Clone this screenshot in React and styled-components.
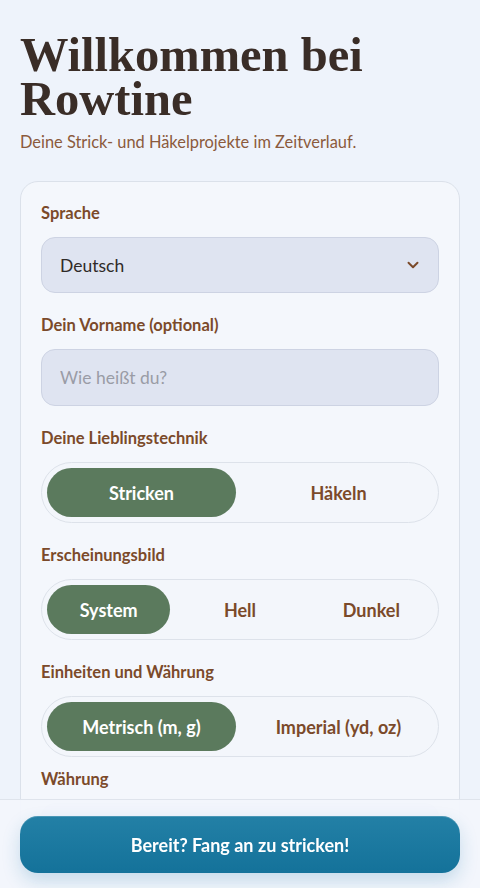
import { useState } from 'react'
import styled, { createGlobalStyle } from 'styled-components'

const GlobalStyle = createGlobalStyle`
    html, body {
        margin: 0;
        padding: 0;
        background: #eef3fb;
    }
    body {
        font-family: Lato, 'Noto Sans', sans-serif;
        color: #3a2d27;
    }
    * {
        box-sizing: border-box;
    }
`

const Page = styled.main`
    padding: 33px 20px 120px 20px;
`

const Title = styled.h1`
    font-family: 'Liberation Serif', 'DejaVu Serif', serif;
    font-weight: 700;
    font-size: 48.5px;
    line-height: 44px;
    color: #3a2d27;
    margin: 0 0 10px 0;
`

const Subtitle = styled.p`
    margin: 0 0 28px 0;
    font-size: 16.4px;
    line-height: 22px;
    color: #8b5a3c;
`

const Card = styled.section`
    background: #f4f7fc;
    border: 1px solid #dbe1ea;
    border-radius: 18px;
    padding: 21px 20px 24px 20px;
    display: flex;
    flex-direction: column;
    gap: 22px;
`

const Field = styled.div`
    display: flex;
    flex-direction: column;
    gap: 14px;
`

const Label = styled.label`
    font-size: 16.5px;
    line-height: 20px;
    font-weight: 700;
    color: #7b4a2a;
    margin-top: ${({ sub }) => (sub ? '-2px' : '0')};
`

const SelectBox = styled.div`
    display: flex;
    align-items: center;
    justify-content: space-between;
    height: 56px;
    padding: 0 16px 0 18px;
    background: #dfe4f1;
    border: 1px solid #cdd3e3;
    border-radius: 14px;
    font-size: 17.5px;
    color: #2f2a28;
`

const TextInput = styled.input`
    height: 57px;
    padding: 0 18px;
    background: #dfe4f1;
    border: 1px solid #cdd3e3;
    border-radius: 14px;
    font-family: inherit;
    font-size: 17.5px;
    color: #2f2a28;
    outline: none;

    &::placeholder {
        color: #9a9ca6;
    }
`

const Segmented = styled.div`
    display: grid;
    grid-template-columns: repeat(${({ count }) => count}, 1fr);
    gap: 8px;
    height: 61px;
    padding: 5px;
    border: 1px solid #dde2ea;
    border-radius: 999px;
    background: #f3f6fb;
`

const Option = styled.button`
    height: 49px;
    border: none;
    border-radius: 999px;
    font-family: inherit;
    font-size: 18px;
    font-weight: 700;
    cursor: pointer;
    background: ${({ active }) => (active ? '#5b7a5d' : 'transparent')};
    color: ${({ active }) => (active ? '#ffffff' : '#7b4a2a')};
`

const BottomBar = styled.footer`
    position: fixed;
    left: 0;
    right: 0;
    bottom: 0;
    padding: 16px 20px 15px 20px;
    background: rgba(243, 246, 252, 0.96);
    border-top: 1px solid #dfe4ec;
`

const StartButton = styled.button`
    width: 100%;
    height: 57px;
    border: none;
    border-radius: 18px;
    background: linear-gradient(180deg, #2380a6 0%, #14729a 100%);
    box-shadow: 0 8px 18px rgba(30, 120, 170, 0.22), inset 0 1px 0 rgba(255, 255, 255, 0.18);
    color: #ffffff;
    font-family: inherit;
    font-size: 18px;
    font-weight: 700;
    cursor: pointer;
`

const Chevron = () => (
    <svg width="18" height="18" viewBox="0 0 24 24" fill="none" stroke="#7b4a2a" strokeWidth="2.6" strokeLinecap="round" strokeLinejoin="round">
        <polyline points="6 9 12 15 18 9" />
    </svg>
)

const SegmentControl = ({ options, value, onChange }) => (
    <Segmented count={options.length}>
        {options.map((o) => (
            <Option key={o} active={o === value} onClick={() => onChange(o)}>
                {o}
            </Option>
        ))}
    </Segmented>
)

const App = () => {
    const [technique, setTechnique] = useState('Stricken')
    const [theme, setTheme] = useState('System')
    const [units, setUnits] = useState('Metrisch (m, g)')

    return (
        <>
            <GlobalStyle />
            <Page>
                <Title>Willkommen bei Rowtine</Title>
                <Subtitle>Deine Strick- und Häkelprojekte im Zeitverlauf.</Subtitle>

                <Card>
                    <Field>
                        <Label>Sprache</Label>
                        <SelectBox>
                            Deutsch
                            <Chevron />
                        </SelectBox>
                    </Field>

                    <Field>
                        <Label>Dein Vorname (optional)</Label>
                        <TextInput placeholder="Wie heißt du?" />
                    </Field>

                    <Field>
                        <Label>Deine Lieblingstechnik</Label>
                        <SegmentControl options={['Stricken', 'Häkeln']} value={technique} onChange={setTechnique} />
                    </Field>

                    <Field>
                        <Label>Erscheinungsbild</Label>
                        <SegmentControl options={['System', 'Hell', 'Dunkel']} value={theme} onChange={setTheme} />
                    </Field>

                    <Field>
                        <Label>Einheiten und Währung</Label>
                        <SegmentControl
                            options={['Metrisch (m, g)', 'Imperial (yd, oz)']}
                            value={units}
                            onChange={setUnits}
                        />
                        <Label sub>Währung</Label>
                        <SelectBox>
                            EUR (€)
                            <Chevron />
                        </SelectBox>
                    </Field>
                </Card>
            </Page>

            <BottomBar>
                <StartButton>Bereit? Fang an zu stricken!</StartButton>
            </BottomBar>
        </>
    )
}

export default App
